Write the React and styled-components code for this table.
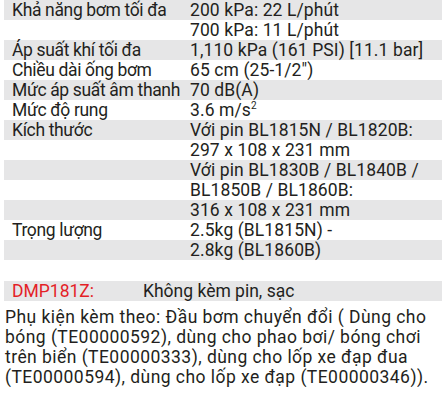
import React from 'react';
import styled, { createGlobalStyle } from 'styled-components';

const GlobalStyle = createGlobalStyle`
  html, body {
    margin: 0;
    padding: 0;
    background: #ffffff;
  }
  body {
    font-family: Roboto, 'Open Sans', sans-serif;
    color: #231f20;
  }
`;

const Page = styled.div`
  width: 442px;
  font-size: 17.5px;
`;

const SpecTable = styled.div`
  display: flex;
  flex-direction: column;
`;

const SpecRow = styled.div`
  display: grid;
  grid-template-columns: 178px 1fr;
  height: 20px;
  line-height: 20px;
  margin-left: 4px;
  padding-left: 8px;
  white-space: nowrap;

  &:nth-child(odd) {
    background: #e6e6e7;
  }
`;

const Label = styled.span`
  letter-spacing: -0.35px;
`;

const Value = styled.span`
  letter-spacing: 0.1px;

  sup {
    font-size: 10px;
    line-height: 0;
    vertical-align: 7px;
  }
`;

const ModelRow = styled.div`
  display: grid;
  grid-template-columns: 131px 1fr;
  height: 20px;
  line-height: 20px;
  margin: 21px 0 0 4px;
  padding-left: 8px;
  background: #e6e6e7;
`;

const ModelCode = styled.span`
  color: #e41f27;
`;

const Accessories = styled.p`
  margin: 0;
  padding: 6px 0 0 5px;
  line-height: 20px;
  letter-spacing: 0.45px;
  white-space: nowrap;
`;

const specs = [
  ['Khả năng bơm tối đa', '200 kPa: 22 L/phút'],
  ['', '700 kPa: 11 L/phút'],
  ['Áp suất khí tối đa', '1,110 kPa (161 PSI) [11.1 bar]'],
  ['Chiều dài ống bơm', '65 cm (25-1/2")'],
  ['Mức áp suất âm thanh', '70 dB(A)'],
  ['Mức độ rung', <>3.6 m/s<sup>2</sup></>],
  ['Kích thước', 'Với pin BL1815N / BL1820B:'],
  ['', '297 x 108 x 231 mm'],
  ['', 'Với pin BL1830B / BL1840B /'],
  ['', 'BL1850B / BL1860B:'],
  ['', '316 x 108 x 231 mm'],
  ['Trọng lượng', '2.5kg (BL1815N) -'],
  ['', '2.8kg (BL1860B)'],
];

export default function App() {
  return (
    <Page>
      <GlobalStyle />
      <SpecTable>
        {specs.map(([label, value], i) => (
          <SpecRow key={i}>
            <Label>{label}</Label>
            <Value>{value}</Value>
          </SpecRow>
        ))}
      </SpecTable>
      <ModelRow>
        <ModelCode>DMP181Z:</ModelCode>
        <span>Không kèm pin, sạc</span>
      </ModelRow>
      <Accessories>
        Phụ kiện kèm theo: Đầu bơm chuyển đổi ( Dùng cho<br />
        bóng (TE00000592), dùng cho phao bơi/ bóng chơi<br />
        trên biển (TE00000333), dùng cho lốp xe đạp đua<br />
        (TE00000594), dùng cho lốp xe đạp (TE00000346)).
      </Accessories>
    </Page>
  );
}
